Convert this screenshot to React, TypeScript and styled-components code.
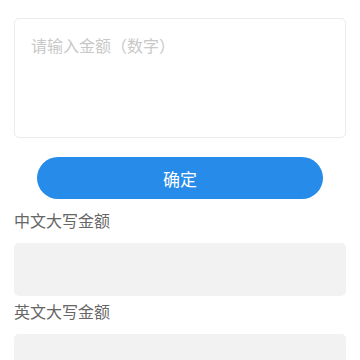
import React, { useState } from "react";
import styled, { createGlobalStyle } from "styled-components";

const Global = createGlobalStyle`
  html, body { margin: 0; padding: 0; background: #ffffff; }
  body { font-family: "Noto Sans CJK SC", "Noto Sans", sans-serif; }
  * { box-sizing: border-box; }
`;

const Page = styled.div`
  display: flex;
  flex-direction: column;
  padding: 18px 14px 0;
`;

const AmountInput = styled.textarea`
  display: block;
  width: 100%;
  height: 120px;
  margin: 0;
  padding: 14px 16px;
  border: 1px solid #ebebeb;
  border-radius: 5px;
  font-family: "Noto Sans CJK SC", "Noto Sans", sans-serif;
  font-size: 16px;
  line-height: 24px;
  color: #333;
  resize: none;
  outline: none;
  &::placeholder { color: #c8c8c8; }
`;

const ConfirmButton = styled.button`
  align-self: center;
  width: 286px;
  height: 42px;
  margin: 19px 0 6px;
  border: none;
  border-radius: 21px;
  background: #278be9;
  color: #ffffff;
  font-family: "Noto Sans CJK SC", "Noto Sans", sans-serif;
  font-size: 17px;
  cursor: pointer;
`;

const Label = styled.div`
  padding: 4px 0 12px;
  font-size: 16px;
  line-height: 22px;
  color: #666666;
`;

const Result = styled.div`
  height: 53px;
  border-radius: 5px;
  background: #f2f2f2;
  padding: 0 12px;
  display: flex;
  align-items: center;
  font-size: 15px;
  color: #333;
`;

export default function App() {
  const [value, setValue] = useState("");
  return (
    <>
      <Global />
      <Page>
        <AmountInput
          placeholder="请输入金额（数字）"
          value={value}
          onChange={(e) => setValue(e.target.value)}
        />
        <ConfirmButton>确定</ConfirmButton>
        <Label>中文大写金额</Label>
        <Result />
        <Label>英文大写金额</Label>
        <Result />
      </Page>
    </>
  );
}
